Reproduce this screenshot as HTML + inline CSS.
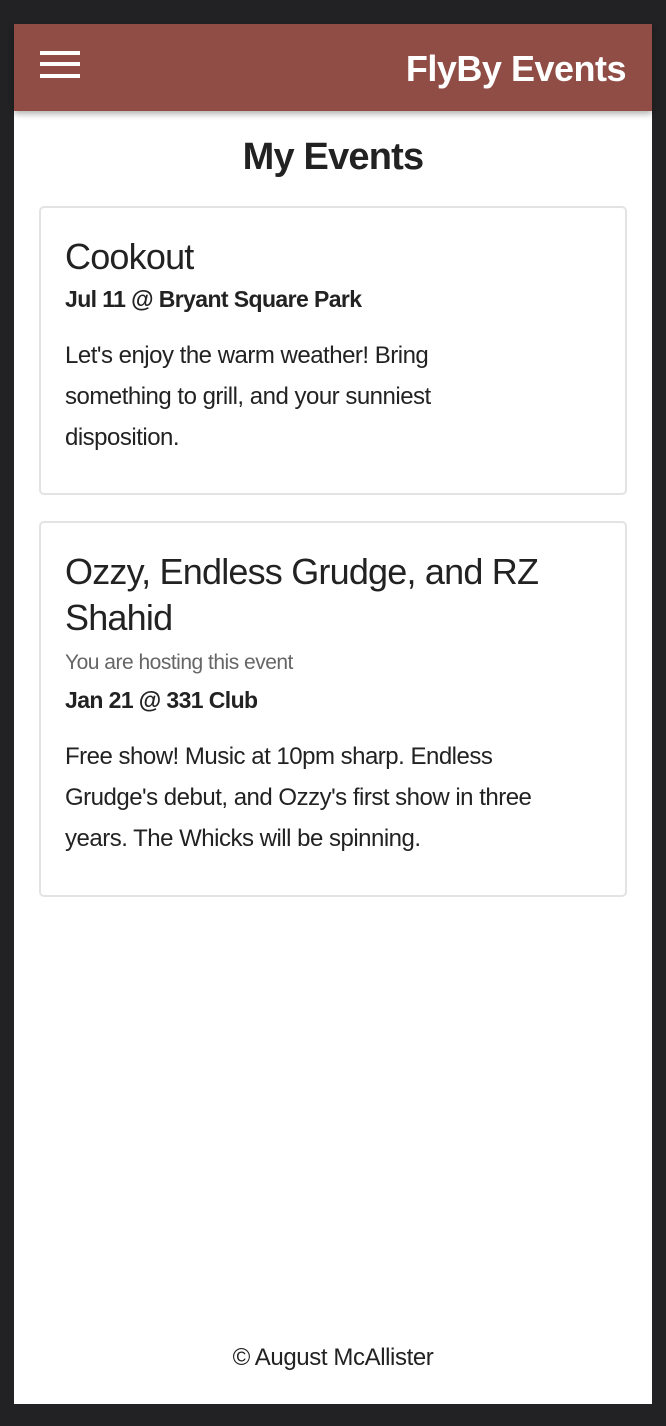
<!DOCTYPE html>
<html><head><meta charset="utf-8"><style>
*{margin:0;padding:0;box-sizing:border-box}
body{width:666px;height:1426px;background:#222224;font-family:"Liberation Sans",sans-serif;color:#222;position:relative;overflow:hidden}
.panel{position:absolute;left:14px;top:24px;width:638px;height:1380px;background:#fff}
.hdr{position:absolute;left:0;top:0;width:638px;height:87px;background:#8f4d46;box-shadow:0 3px 6px rgba(0,0,0,.3)}
.bar{position:absolute;left:26px;width:40px;height:4px;background:#fff}
.brand{position:absolute;right:26px;top:24px;color:#fff;font-weight:bold;font-size:36px;letter-spacing:-0.5px}
h1{position:absolute;top:112px;width:100%;text-align:center;font-size:38px;font-weight:bold;letter-spacing:-0.8px;color:#222}
.card{position:absolute;left:25px;width:588px;border:2px solid #e3e3e3;border-radius:5px;padding:0 24px;white-space:nowrap}
.t{font-size:36px;line-height:46px;letter-spacing:-0.8px}
.d{font-size:23px;font-weight:bold;letter-spacing:-0.6px}
.p{font-size:24px;line-height:41px;letter-spacing:-0.5px}
.g{font-size:21px;color:#666;letter-spacing:-0.5px}
.foot{position:absolute;top:1320px;width:100%;text-align:center;font-size:24px;letter-spacing:-0.4px}
</style></head><body>
<div class="panel">
<div class="hdr"><div class="bar" style="top:27px"></div><div class="bar" style="top:38px"></div><div class="bar" style="top:50px"></div><div class="brand">FlyBy Events</div></div>
<h1>My Events</h1>
<div class="card" style="top:182px;height:289px">
<div class="t" style="margin-top:26px">Cookout</div>
<div class="d" style="margin-top:6px">Jul 11 @ Bryant Square Park</div>
<div class="p" style="margin-top:22px">Let's enjoy the warm weather! Bring<br>something to grill, and your sunniest<br>disposition.</div>
</div>
<div class="card" style="top:497px;height:376px">
<div class="t" style="margin-top:26px">Ozzy, Endless Grudge, and RZ<br>Shahid</div>
<div class="g" style="margin-top:10px">You are hosting this event</div>
<div class="d" style="margin-top:12px">Jan 21 @ 331 Club</div>
<div class="p" style="margin-top:22px">Free show! Music at 10pm sharp. Endless<br>Grudge's debut, and Ozzy's first show in three<br>years. The Whicks will be spinning.</div>
</div>
<div class="foot">© August McAllister</div>
</div>
</body></html>
